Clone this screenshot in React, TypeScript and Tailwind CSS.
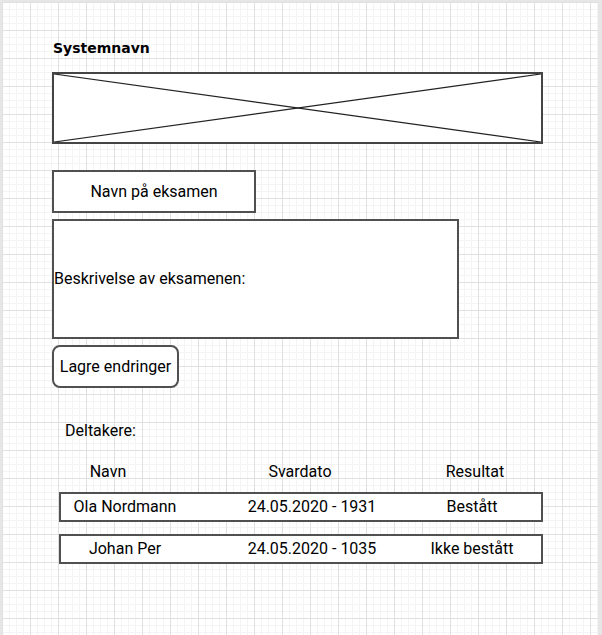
const rows = [
  { name: "Ola Nordmann", date: "24.05.2020 - 1931", result: "Bestått" },
  { name: "Johan Per", date: "24.05.2020 - 1035", result: "Ikke bestått" },
];

export default function App() {
  return (
    <div className="h-[635px] w-[602px] overflow-hidden border-l-2 border-r-4 border-t-2 border-[#e6e6e6] bg-white bg-[linear-gradient(to_right,#e0e0e0_1px,transparent_1px),linear-gradient(to_bottom,#e0e0e0_1px,transparent_1px),linear-gradient(to_right,#f4f4f4_1px,transparent_1px),linear-gradient(to_bottom,#f4f4f4_1px,transparent_1px)] bg-size-[28px_28px,28px_28px,7px_7px,7px_7px] font-['Roboto',sans-serif] text-[16px] text-black">
      <div className="flex flex-col items-start pl-[50px] pt-[36px]">
        <h1 className="ml-px font-['DejaVu_Sans',sans-serif] text-[14px] font-bold leading-[20px]">Systemnavn</h1>

        <div className="mt-[14px] h-[72px] w-[491px] border-2 border-[#444] bg-white">
          <svg className="h-full w-full" viewBox="0 0 100 100" preserveAspectRatio="none">
            <line x1="0" y1="0" x2="100" y2="100" stroke="#222" strokeWidth="1.2" vectorEffect="non-scaling-stroke" />
            <line x1="0" y1="100" x2="100" y2="0" stroke="#222" strokeWidth="1.2" vectorEffect="non-scaling-stroke" />
          </svg>
        </div>

        <div className="mt-[26px] flex h-[43px] w-[204px] items-center justify-center border-2 border-[#505050] bg-white">
          Navn på eksamen
        </div>

        <div className="mt-[6px] flex h-[120px] w-[407px] items-center border-2 border-[#505050] bg-white">
          Beskrivelse av eksamenen:
        </div>

        <button
          type="button"
          className="mt-[6px] flex h-[43px] w-[127px] items-center justify-center rounded-[8px] border-2 border-[#505050] bg-white"
        >
          Lagre endringer
        </button>

        <p className="ml-[13px] mt-[33px] leading-[20px]">Deltakere:</p>

        <div className="ml-[7px] mt-[21px] grid grid-cols-[98px_286px_64px] leading-[20px]">
          <span className="flex justify-center whitespace-nowrap">Navn</span>
          <span className="flex justify-center whitespace-nowrap">Svardato</span>
          <span className="flex justify-center whitespace-nowrap">Resultat</span>
        </div>

        <div className="ml-[7px] mt-[10px] flex flex-col gap-[12px]">
          {rows.map((r) => (
            <div
              key={r.name}
              className="grid h-[30px] w-[484px] grid-cols-[128px_246px_74px] items-center border-2 border-[#505050] bg-white"
            >
              <span className="flex justify-center whitespace-nowrap">{r.name}</span>
              <span className="flex justify-center whitespace-nowrap">{r.date}</span>
              <span className="flex justify-center whitespace-nowrap">{r.result}</span>
            </div>
          ))}
        </div>
      </div>
    </div>
  );
}
